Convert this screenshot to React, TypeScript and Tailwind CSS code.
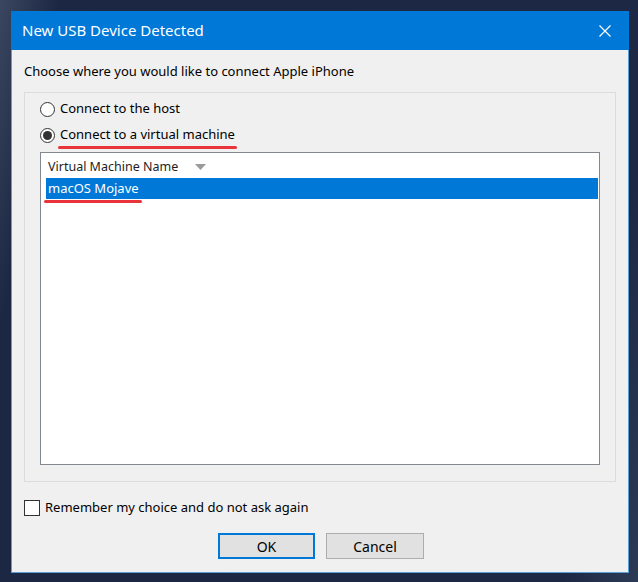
const FONT = { fontFamily: '"Noto Sans", "Open Sans", sans-serif' };

function Radio({ checked }: { checked?: boolean }) {
  return (
    <span className="flex h-[15px] w-[15px] items-center justify-center rounded-full border border-[#333] bg-white">
      {checked && <span className="h-[9px] w-[9px] rounded-full bg-[#333]" />}
    </span>
  );
}

export default function App() {
  return (
    <div
      className="h-[582px] w-[638px] bg-[linear-gradient(100deg,#3b4660_0%,#1c2843_8%,#1d2944_90%,#2d3a56_100%)] pl-[11px] pt-[11px] text-[13px] text-black"
      style={FONT}
    >
      <div className="flex h-[562px] w-[618px] flex-col border border-t-0 border-[#5b9fd8] bg-[#f0f0f0]">
        {/* Title bar */}
        <div className="-mx-px flex h-[39px] items-center justify-between bg-[#0078d7] pl-[11px] pr-[18px]">
          <span className="text-[15px] text-white">New USB Device Detected</span>
          <svg width="12" height="12" viewBox="0 0 12 12" stroke="white" strokeWidth="1.2">
            <path d="M0.5 0.5 L11.5 11.5 M11.5 0.5 L0.5 11.5" />
          </svg>
        </div>

        <div className="pl-[12px] pt-[11px] leading-[20px]">Choose where you would like to connect Apple iPhone</div>

        {/* Group box */}
        <div className="ml-[12px] mt-[11px] flex h-[390px] w-[592px] flex-col border border-[#dcdcdc] pl-[15px] pr-[15px] pt-[6px]">
          <label className="flex h-[20px] items-center gap-[5px]">
            <Radio />
            <span>Connect to the host</span>
          </label>
          <label className="mt-[6px] flex h-[20px] items-center gap-[5px]">
            <Radio checked />
            <span className="relative">
              Connect to a virtual machine
              <span className="absolute -left-[2px] -right-[2px] top-[21px] h-[3px] rounded-full bg-[#e8343a]" />
            </span>
          </label>

          <div className="mt-[7px] flex h-[313px] w-[560px] flex-col border border-[#828790] bg-white">
            <div className="flex h-[25px] items-center gap-[17px] pl-[7px] pt-[3px] text-[12.5px] text-[#1e1e1e]">
              <span>Virtual Machine Name</span>
              <svg width="11" height="6" viewBox="0 0 11 6">
                <path d="M0 0 L11 0 L5.5 6 Z" fill="#9a9a9a" />
              </svg>
            </div>
            <div className="ml-[5px] mr-px flex h-[21px] items-center bg-[#0078d7] pl-[2px] text-white">
              <span className="relative">
                macOS Mojave
                <span className="absolute -left-[4px] -right-[3px] top-[21px] h-[3px] rounded-full bg-[#e8343a]" />
              </span>
            </div>
          </div>
        </div>

        {/* Checkbox */}
        <label className="ml-[12px] mt-[18px] flex h-[16px] items-center gap-[5px]">
          <span className="h-[16px] w-[16px] border border-[#333] bg-white" />
          <span>Remember my choice and do not ask again</span>
        </label>

        {/* Buttons */}
        <div className="mt-[17px] flex justify-center gap-[11px] pl-[2px]">
          <button className="h-[26px] w-[97px] border-2 border-[#0078d7] bg-[#e1e1e1] text-[14px]">OK</button>
          <button className="h-[26px] w-[98px] border border-[#adadad] bg-[#e1e1e1] text-[14px]">Cancel</button>
        </div>
      </div>
    </div>
  );
}
